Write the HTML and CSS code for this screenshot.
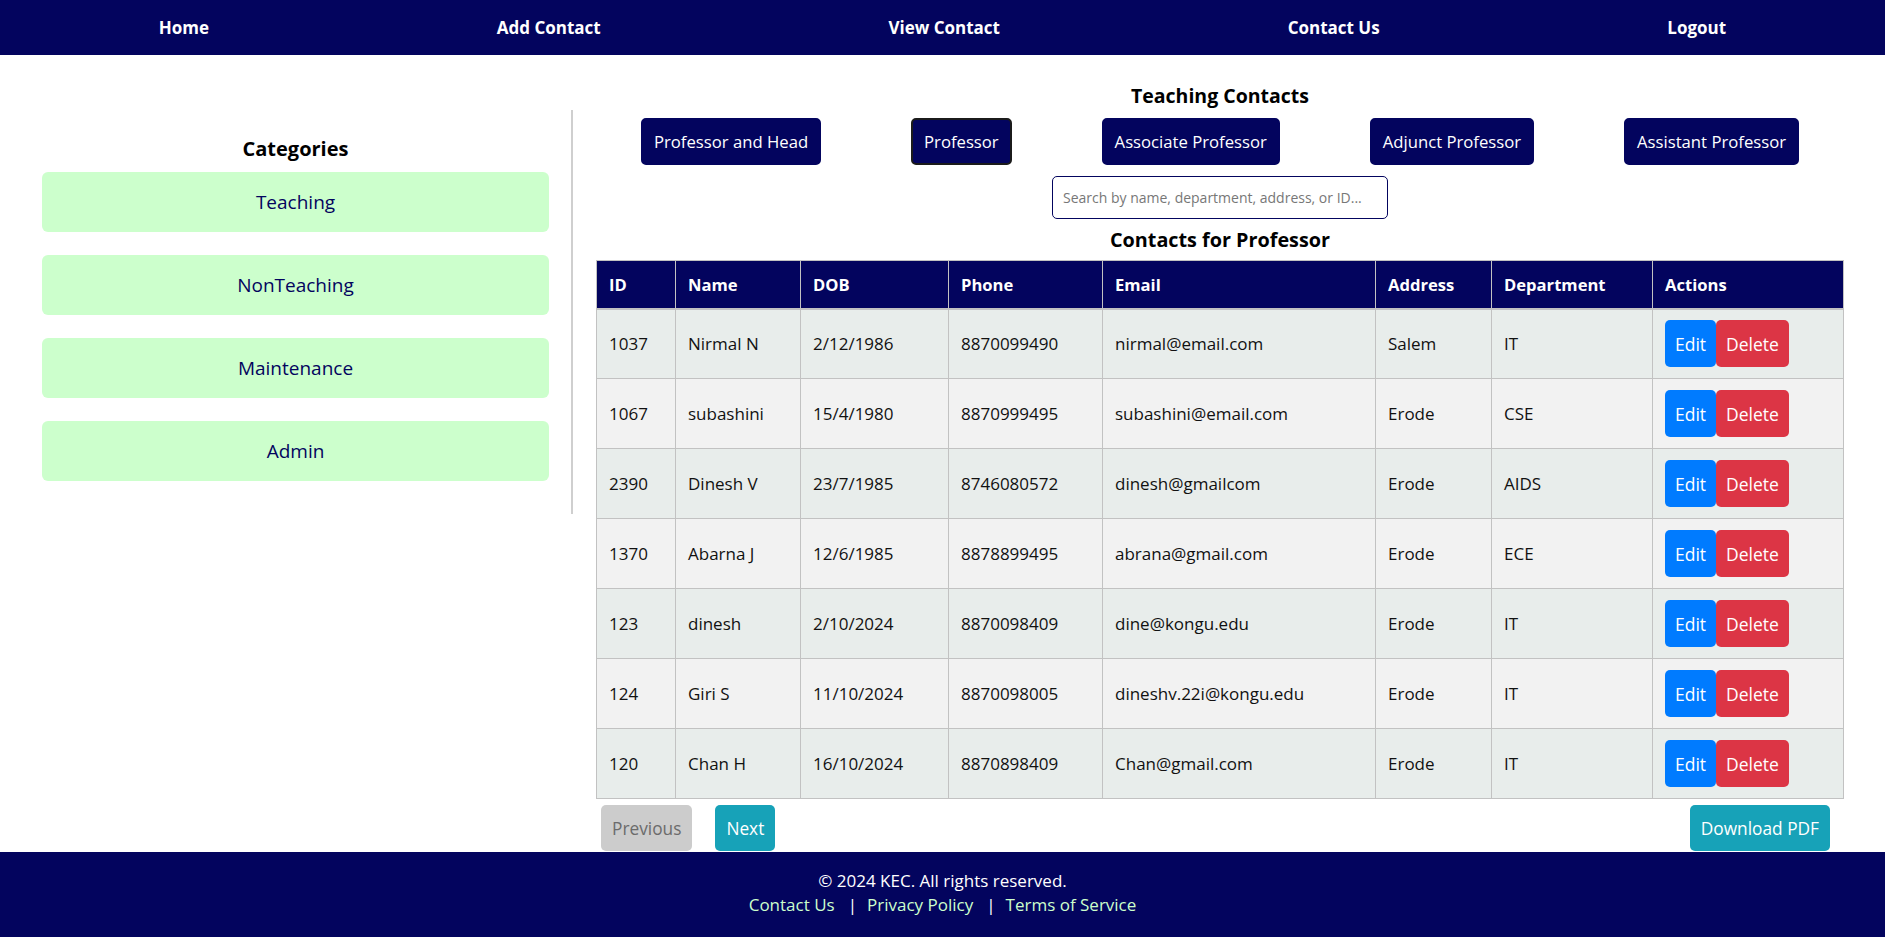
FILE: index.html
```html
<!DOCTYPE html>
<html lang="en">
<head>
<meta charset="utf-8">
<title>Teaching Contacts</title>
<link rel="stylesheet" href="styles.css">
</head>
<body>
<nav class="topnav">
  <a class="nav-link" href="#">Home</a>
  <a class="nav-link" href="#">Add Contact</a>
  <a class="nav-link" href="#">View Contact</a>
  <a class="nav-link" href="#">Contact Us</a>
  <a class="nav-link" href="#">Logout</a>
</nav>

<main class="page">
  <aside class="sidebar">
    <h2 class="side-title">Categories</h2>
    <ul class="cat-list">
      <li><button class="cat-btn">Teaching</button></li>
      <li><button class="cat-btn">NonTeaching</button></li>
      <li><button class="cat-btn">Maintenance</button></li>
      <li><button class="cat-btn">Admin</button></li>
    </ul>
  </aside>

  <section class="content">
    <h2 class="section-title">Teaching Contacts</h2>
    <div class="role-bar">
      <button class="role-btn">Professor and Head</button>
      <button class="role-btn active">Professor</button>
      <button class="role-btn">Associate Professor</button>
      <button class="role-btn">Adjunct Professor</button>
      <button class="role-btn">Assistant Professor</button>
    </div>
    <div class="search-wrap">
      <input class="search" type="text" placeholder="Search by name, department, address, or ID...">
    </div>
    <h3 class="table-title">Contacts for Professor</h3>
    <table class="contacts">
      <colgroup>
        <col class="c-id"><col class="c-name"><col class="c-dob"><col class="c-phone">
        <col class="c-email"><col class="c-addr"><col class="c-dept"><col class="c-act">
      </colgroup>
      <thead>
        <tr><th>ID</th><th>Name</th><th>DOB</th><th>Phone</th><th>Email</th><th>Address</th><th>Department</th><th>Actions</th></tr>
      </thead>
      <tbody>
        <tr><td>1037</td><td>Nirmal N</td><td>2/12/1986</td><td>8870099490</td><td>nirmal@email.com</td><td>Salem</td><td>IT</td><td><div class="actions"><button class="btn-edit">Edit</button><button class="btn-del">Delete</button></div></td></tr>
        <tr><td>1067</td><td>subashini</td><td>15/4/1980</td><td>8870999495</td><td>subashini@email.com</td><td>Erode</td><td>CSE</td><td><div class="actions"><button class="btn-edit">Edit</button><button class="btn-del">Delete</button></div></td></tr>
        <tr><td>2390</td><td>Dinesh V</td><td>23/7/1985</td><td>8746080572</td><td>dinesh@gmailcom</td><td>Erode</td><td>AIDS</td><td><div class="actions"><button class="btn-edit">Edit</button><button class="btn-del">Delete</button></div></td></tr>
        <tr><td>1370</td><td>Abarna J</td><td>12/6/1985</td><td>8878899495</td><td>abrana@gmail.com</td><td>Erode</td><td>ECE</td><td><div class="actions"><button class="btn-edit">Edit</button><button class="btn-del">Delete</button></div></td></tr>
        <tr><td>123</td><td>dinesh</td><td>2/10/2024</td><td>8870098409</td><td>dine@kongu.edu</td><td>Erode</td><td>IT</td><td><div class="actions"><button class="btn-edit">Edit</button><button class="btn-del">Delete</button></div></td></tr>
        <tr><td>124</td><td>Giri S</td><td>11/10/2024</td><td>8870098005</td><td>dineshv.22i@kongu.edu</td><td>Erode</td><td>IT</td><td><div class="actions"><button class="btn-edit">Edit</button><button class="btn-del">Delete</button></div></td></tr>
        <tr><td>120</td><td>Chan H</td><td>16/10/2024</td><td>8870898409</td><td>Chan@gmail.com</td><td>Erode</td><td>IT</td><td><div class="actions"><button class="btn-edit">Edit</button><button class="btn-del">Delete</button></div></td></tr>
      </tbody>
    </table>
    <div class="pager">
      <div class="pager-nav">
        <button class="pg-btn pg-prev">Previous</button>
        <button class="pg-btn pg-next">Next</button>
      </div>
      <button class="pg-btn pg-pdf">Download PDF</button>
    </div>
  </section>
</main>

<footer class="site-footer">
  <p class="copy">© 2024 KEC. All rights reserved.</p>
  <p class="foot-links">
    <a href="#">Contact Us</a><span class="sep">|</span><a href="#">Privacy Policy</a><span class="sep">|</span><a href="#">Terms of Service</a>
  </p>
</footer>
</body>
</html>
```

FILE: styles.css
```css
* { box-sizing: border-box; }

body {
  margin: 0;
  font-family: "Open Sans", "Noto Sans", sans-serif;
  font-size: 17px;
  color: #000;
  background: #fff;
}

button, input { font-family: inherit; }

/* ---------- top navigation ---------- */
.topnav {
  height: 55px;
  background: #03045e;
  display: flex;
  align-items: center;
  justify-content: space-around;
  padding: 0 15px;
}
.nav-link {
  color: #fff;
  font-weight: 700;
  font-size: 17px;
  text-decoration: none;
}

/* ---------- page layout ---------- */
.page {
  display: flex;
  align-items: flex-start;
}

.sidebar {
  flex: 0 0 573px;
  margin-top: 55px;
  padding: 25px 22px 33px 42px;
  border-right: 2px solid #cfcfcf;
}
.side-title {
  margin: 0 0 10px;
  text-align: center;
  font-size: 20px;
  line-height: 27px;
  font-weight: 700;
}
.cat-list {
  list-style: none;
  margin: 0;
  padding: 0;
  display: flex;
  flex-direction: column;
  gap: 23px;
}
.cat-btn {
  display: block;
  width: 100%;
  height: 60px;
  border: none;
  border-radius: 6px;
  background: #ccffcc;
  color: #03045e;
  font-size: 19px;
  cursor: pointer;
}

.content {
  flex: 1;
  padding: 27px 42px 1px 23px;
}
.section-title {
  margin: 0;
  text-align: center;
  font-size: 19.5px;
  line-height: 27px;
  font-weight: 700;
}
.role-bar {
  margin-top: 9px;
  display: flex;
  justify-content: space-around;
}
.role-btn {
  height: 47px;
  padding: 0 11px;
  background: #03045e;
  color: #fff;
  border: 2px solid #03045e;
  border-radius: 5px;
  font-size: 16.7px;
}
.role-btn.active {
  border-color: #1b1b1b;
}

.search-wrap {
  margin-top: 11px;
  display: flex;
  justify-content: center;
}
.search {
  width: 336px;
  height: 43px;
  border: 1px solid #03045e;
  border-radius: 5px;
  padding: 0 10px;
  font-size: 14px;
  color: #333;
}
.search::placeholder { color: #777; }

.table-title {
  margin: 7px 0 7px;
  text-align: center;
  font-size: 19.8px;
  line-height: 27px;
  font-weight: 700;
}

/* ---------- table ---------- */
.contacts {
  width: 100%;
  border-collapse: collapse;
  table-layout: fixed;
}
.c-id { width: 79px; }
.c-name { width: 125px; }
.c-dob { width: 148px; }
.c-phone { width: 154px; }
.c-email { width: 273px; }
.c-addr { width: 116px; }
.c-dept { width: 161px; }
.c-act { width: 191px; }

.contacts th,
.contacts td {
  border: 1px solid #c2c2c2;
  text-align: left;
  vertical-align: middle;
  padding: 0 12px;
  white-space: nowrap;
}
.contacts th {
  background: #03045e;
  color: #fff;
  font-weight: 700;
  font-size: 16.6px;
  height: 48px;
  border-bottom: 2px solid #c2c2c2;
}
.contacts td {
  height: 70px;
  font-size: 17px;
  color: #111;
}
.contacts tbody tr:nth-child(odd) td { background: #e8edeb; }
.contacts tbody tr:nth-child(even) td { background: #f2f2f2; }

.actions {
  display: flex;
}
.btn-edit,
.btn-del {
  height: 47px;
  padding: 0 10px;
  border: none;
  border-radius: 5px;
  color: #fff;
  font-size: 17.5px;
}
.btn-edit { background: #007bff; }
.btn-del { background: #dc3545; }

/* ---------- pager ---------- */
.pager {
  margin-top: 6px;
  display: flex;
  justify-content: space-between;
  align-items: center;
}
.pager-nav {
  display: flex;
  gap: 23px;
  margin-left: 5px;
}
.pg-btn {
  height: 46px;
  padding: 0 11px;
  border: none;
  border-radius: 5px;
  font-size: 17.3px;
}
.pg-prev { background: #cccccc; color: #6b6b6b; }
.pg-next { background: #17a2b8; color: #fff; }
.pg-pdf { background: #17a2b8; color: #fff; margin-right: 14px; padding: 0 11px; }

/* ---------- footer ---------- */
.site-footer {
  height: 85px;
  background: #03045e;
  color: #fff;
  text-align: center;
  padding-top: 17px;
  font-size: 17px;
}
.copy,
.foot-links {
  margin: 0;
  line-height: 24px;
}
.foot-links a {
  color: #ccffcc;
  text-decoration: none;
}
.sep {
  margin: 0 10px 0 13px;
}
```
